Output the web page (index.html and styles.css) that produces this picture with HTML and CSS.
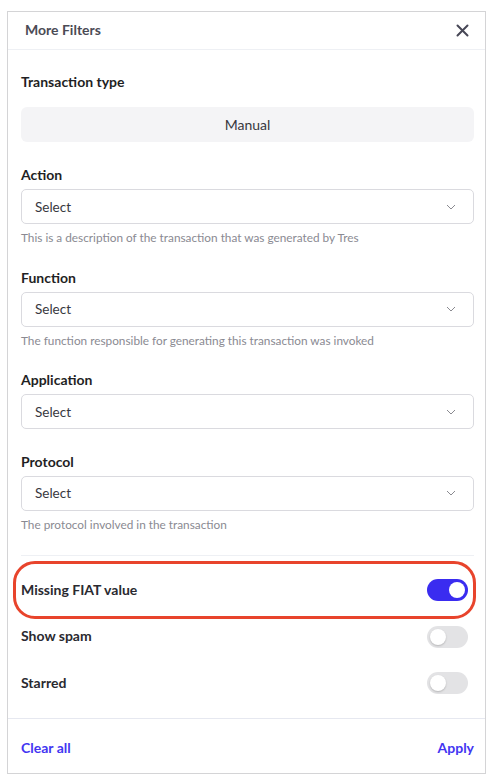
FILE: index.html
```html
<!DOCTYPE html>
<html>
<head>
<meta charset="utf-8">
<link rel="stylesheet" href="styles.css">
</head>
<body>
<div class="panel">
  <div class="header">
    <span class="title">More Filters</span>
    <svg class="close" width="13" height="13" viewBox="0 0 13 13"><path d="M1.5 1.5 L11.5 11.5 M11.5 1.5 L1.5 11.5" stroke="#474756" stroke-width="2" stroke-linecap="round" fill="none"/></svg>
  </div>
  <div class="content">
    <div class="group">
      <div class="label">Transaction type</div>
      <div class="segment">Manual</div>
    </div>
    <div class="group">
      <div class="label">Action</div>
      <div class="select"><span>Select</span><svg width="10" height="6" viewBox="0 0 10 6"><path d="M1 1 L5 5 L9 1" stroke="#8a8a90" stroke-width="1" fill="none"/></svg></div>
      <div class="desc">This is a description of the transaction that was generated by Tres</div>
    </div>
    <div class="group">
      <div class="label">Function</div>
      <div class="select"><span>Select</span><svg width="10" height="6" viewBox="0 0 10 6"><path d="M1 1 L5 5 L9 1" stroke="#8a8a90" stroke-width="1" fill="none"/></svg></div>
      <div class="desc">The function responsible for generating this transaction was invoked</div>
    </div>
    <div class="group">
      <div class="label">Application</div>
      <div class="select"><span>Select</span><svg width="10" height="6" viewBox="0 0 10 6"><path d="M1 1 L5 5 L9 1" stroke="#8a8a90" stroke-width="1" fill="none"/></svg></div>
    </div>
    <div class="group">
      <div class="label">Protocol</div>
      <div class="select"><span>Select</span><svg width="10" height="6" viewBox="0 0 10 6"><path d="M1 1 L5 5 L9 1" stroke="#8a8a90" stroke-width="1" fill="none"/></svg></div>
      <div class="desc">The protocol involved in the transaction</div>
    </div>
    <div class="toggles">
      <div class="row highlighted">
        <span class="row-label">Missing FIAT value</span>
        <span class="toggle on"><span class="knob"></span></span>
        <span class="ring"></span>
      </div>
      <div class="row">
        <span class="row-label">Show spam</span>
        <span class="toggle"><span class="knob"></span></span>
      </div>
      <div class="row">
        <span class="row-label">Starred</span>
        <span class="toggle"><span class="knob"></span></span>
      </div>
    </div>
  </div>
  <div class="footer">
    <span class="link">Clear all</span>
    <span class="link">Apply</span>
  </div>
</div>
</body>
</html>
```
FILE: styles.css
```css
html, body {
  margin: 0;
  padding: 0;
  background: #ffffff;
}
body {
  font-family: Lato, "Noto Sans", sans-serif;
  color: #222226;
}
.panel {
  margin: 11px 0 0 7px;
  width: 477px;
  height: 761px;
  border: 1px solid #d4d4d6;
  display: flex;
  flex-direction: column;
}
.header {
  height: 37px;
  border-bottom: 1px solid #eef0f4;
  display: flex;
  align-items: center;
  justify-content: space-between;
  padding: 0 16px 0 17px;
}
.title {
  font-size: 14px;
  font-weight: 700;
  color: #4b4b55;
  position: relative;
  top: -1px;
}
.close {
  display: block;
}
.content {
  flex: 1;
  padding: 24px 11px 0 13px;
}
.group {
  margin-bottom: 24.5px;
}
.group:first-child {
  margin-bottom: 25px;
}
.label {
  font-size: 14px;
  font-weight: 700;
  line-height: 16px;
  color: #1f1f24;
}
.segment {
  margin-top: 17px;
  height: 35px;
  background: #f4f4f6;
  border-radius: 6px;
  display: flex;
  align-items: center;
  justify-content: center;
  font-size: 14px;
  color: #38383e;
}
.select {
  margin-top: 6px;
  border: 1px solid #dadadf;
  border-radius: 5px;
  box-sizing: border-box;
  height: 35px;
  display: flex;
  align-items: center;
  justify-content: space-between;
  padding: 0 17px 0 13px;
  font-size: 13.5px;
  color: #38383e;
}
.select svg {
  display: block;
}
.desc {
  margin-top: 7px;
  font-size: 11.8px;
  line-height: 14px;
  color: #8a8a92;
}
.toggles {
  border-top: 1px solid #eef0f4;
  margin-top: -1px;
  padding: 23px 0 24px 0;
  display: flex;
  flex-direction: column;
  gap: 24.5px;
}
.row {
  position: relative;
  height: 22px;
  display: flex;
  align-items: center;
  justify-content: space-between;
  padding-right: 6px;
}
.row-label {
  font-size: 14px;
  font-weight: 700;
  color: #2a2a30;
  position: relative;
  top: -1px;
}
.toggle {
  width: 41px;
  height: 22px;
  border-radius: 11px;
  background: #e3e3e5;
  position: relative;
  box-sizing: border-box;
}
.toggle .knob {
  position: absolute;
  left: 3px;
  top: 3px;
  width: 16px;
  height: 16px;
  border-radius: 50%;
  background: #ffffff;
  box-shadow: 0 1px 2px rgba(0,0,0,0.2);
}
.toggle.on {
  background: #3a2cf0;
}
.toggle.on .knob {
  left: 22px;
  box-shadow: none;
}
.ring {
  position: absolute;
  left: -8px;
  right: -2px;
  top: -18px;
  bottom: -18px;
  border: 3px solid #e8442c;
  border-radius: 22px;
  pointer-events: none;
}
.footer {
  height: 55px;
  border-top: 1px solid #e6e8f0;
  display: flex;
  align-items: center;
  justify-content: space-between;
  padding: 2px 11px 0 13px;
  box-sizing: border-box;
}
.link {
  font-size: 14px;
  font-weight: 700;
  color: #4335f2;
}
```
